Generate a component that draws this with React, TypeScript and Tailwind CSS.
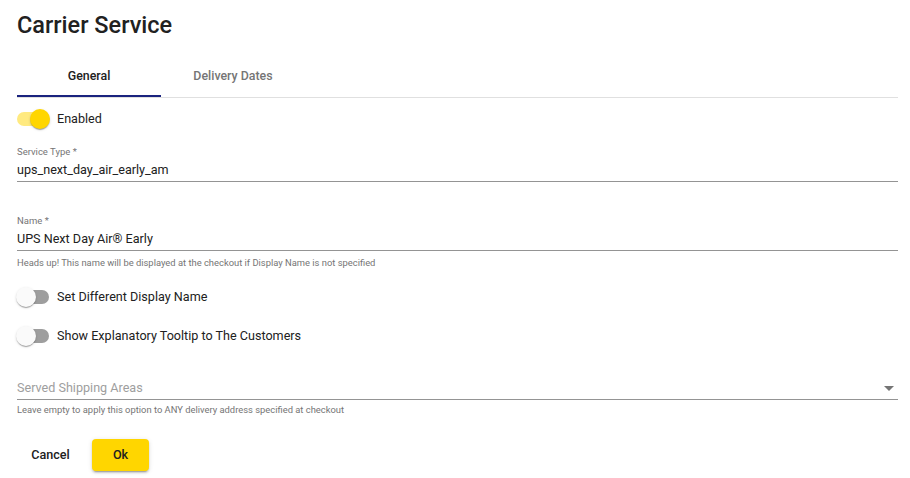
import React from "react";

function Toggle({ on }: { on: boolean }) {
  return (
    <div className="relative w-[34px] h-[24px] flex items-center">
      <div className={`w-[32px] h-[14px] rounded-full ${on ? "bg-[#ffea80]" : "bg-[#9e9e9e]"}`} />
      <div
        className={`absolute top-[2px] w-[20px] h-[20px] rounded-full shadow-[0_2px_1px_-1px_rgba(0,0,0,0.2),0_1px_1px_0_rgba(0,0,0,0.14),0_1px_3px_0_rgba(0,0,0,0.12)] ${
          on ? "left-[13px] bg-[#ffd600]" : "left-[-1px] bg-[#fafafa]"
        }`}
      />
    </div>
  );
}

function SwitchRow({ on, label, className }: { on: boolean; label: string; className: string }) {
  return (
    <div className={`flex items-center h-[24px] gap-[6px] ${className}`}>
      <Toggle on={on} />
      <span className="text-[12.6px] text-[#212121]">{label}</span>
    </div>
  );
}

function Field({ label, value, className }: { label: string; value: string; className: string }) {
  return (
    <div className={className}>
      <div className="h-[14px] leading-[14px] text-[9.5px] text-[#757575]">{label}</div>
      <div className="h-[22px] leading-[22px] text-[12.6px] text-[#212121] border-b border-[#949494] box-content">{value}</div>
    </div>
  );
}

export default function App() {
  return (
    <div className="w-[910px] h-[478px] bg-white px-[17px] pr-[12px] font-['Roboto',sans-serif]">
      <div className="h-[51px] flex items-center text-[23.5px] font-medium text-[#212121]">Carrier Service</div>

      <div className="mt-[5px] flex border-b border-[#e0e0e0]">
        <div className="relative w-[144px] h-[41px] flex items-center justify-center text-[12.4px] font-medium text-[#212121]">
          General
          <div className="absolute bottom-0 left-0 right-0 h-[2px] bg-[#1a237e]" />
        </div>
        <div className="w-[144px] h-[41px] flex items-center justify-center text-[12.4px] font-medium text-[#757575]">
          Delivery Dates
        </div>
      </div>

      <SwitchRow on={true} label="Enabled" className="mt-[9px]" />

      <Field label="Service Type *" value="ups_next_day_air_early_am" className="mt-[14px]" />

      <Field label="Name *" value="UPS Next Day Air® Early" className="mt-[32px]" />
      <div className="mt-[6px] h-[12px] leading-[12px] text-[9.4px] text-[#757575]">
        Heads up! This name will be displayed at the checkout if Display Name is not specified
      </div>

      <SwitchRow on={false} label="Set Different Display Name" className="mt-[16px]" />
      <SwitchRow on={false} label="Show Explanatory Tooltip to The Customers" className="mt-[15px]" />

      <div className="mt-[29px] h-[22px] flex items-center justify-between border-b border-[#949494] box-content">
        <span className="text-[12.6px] text-[#9e9e9e]">Served Shipping Areas</span>
        <svg width="10" height="5" viewBox="0 0 10 5" className="mr-[4px]">
          <path d="M0 0 L10 0 L5 5 Z" fill="#757575" />
        </svg>
      </div>
      <div className="mt-[4px] h-[12px] leading-[12px] text-[9.4px] text-[#757575]">
        Leave empty to apply this option to ANY delivery address specified at checkout
      </div>

      <div className="mt-[23px] flex items-center gap-[8px]">
        <button className="w-[67px] h-[32px] text-[12.6px] font-medium text-[#212121]">Cancel</button>
        <button className="w-[57px] h-[32px] rounded-[4px] bg-[#ffd600] text-[12.6px] font-medium text-[#212121] shadow-[0_3px_1px_-2px_rgba(0,0,0,0.2),0_2px_2px_0_rgba(0,0,0,0.14),0_1px_5px_0_rgba(0,0,0,0.12)]">
          Ok
        </button>
      </div>
    </div>
  );
}
